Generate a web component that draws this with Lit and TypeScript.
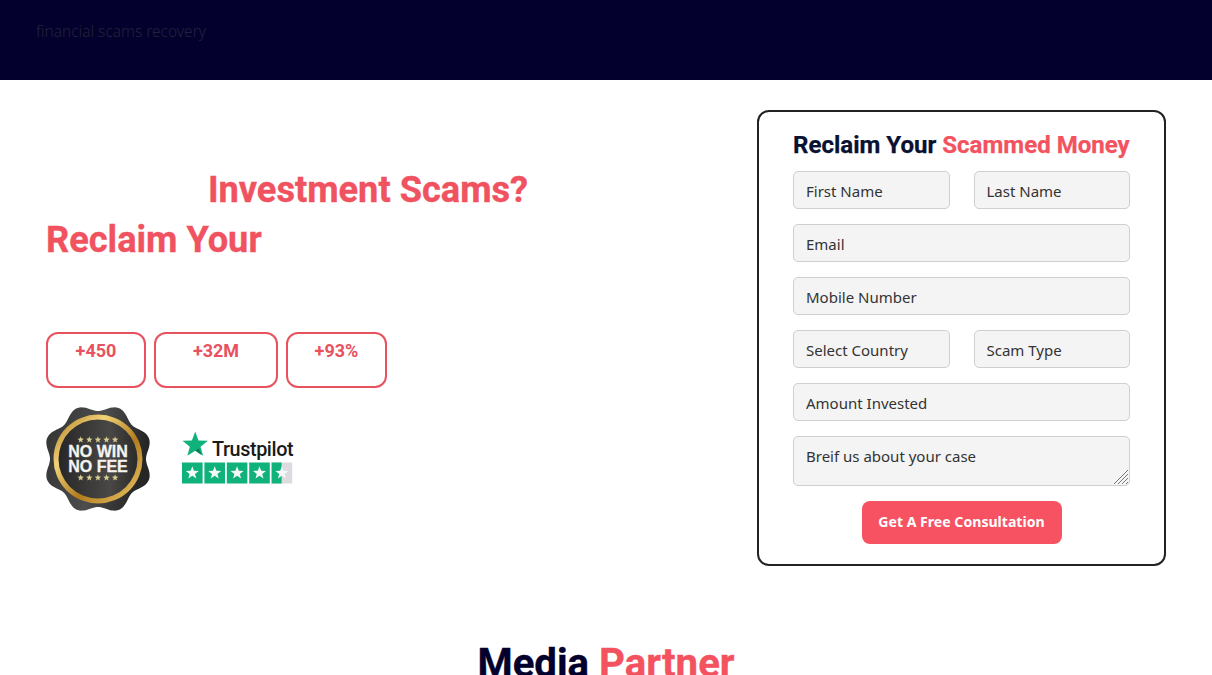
import { LitElement, html, css, svg } from "lit";
import { customElement } from "lit/decorators.js";

function badgePath(): string {
  const pts: string[] = [];
  const n = 240;
  for (let i = 0; i < n; i++) {
    const t = (i / n) * Math.PI * 2;
    const r = 51.5 - 3.5 * Math.cos(8 * t);
    pts.push(`${(52 + r * Math.sin(t)).toFixed(2)},${(52 - r * Math.cos(t)).toFixed(2)}`);
  }
  return "M" + pts.join("L") + "Z";
}

function starPoints(cx: number, cy: number, R: number): string {
  const r = R * 0.42;
  const p: string[] = [];
  for (let i = 0; i < 10; i++) {
    const a = (i * Math.PI) / 5;
    const rad = i % 2 ? r : R;
    p.push(`${(cx + rad * Math.sin(a)).toFixed(2)},${(cy - rad * Math.cos(a)).toFixed(2)}`);
  }
  return p.join(" ");
}

@customElement("app-root")
export class AppRoot extends LitElement {
  static styles = css`
    :host {
      display: block;
      height: 675px;
      overflow: hidden;
      background: #fff;
      font-family: "Noto Sans", "Open Sans", sans-serif;
    }
    .top {
      height: 80px;
      box-sizing: border-box;
      background: #03002e;
      padding: 20px 36px;
      color: #232239;
      font-size: 15.5px;
      font-weight: 300;
      line-height: 23px;
    }
    .main {
      display: flex;
      justify-content: space-between;
      padding: 30px 46px 0;
    }
    .left {
      width: 644px;
    }
    h1 {
      margin: 0;
      padding-top: 55px;
      font: 700 36.2px/50px Roboto, sans-serif;
      -webkit-text-stroke: 0.35px currentColor;
      color: #f0525f;
    }
    .l1 {
      text-align: center;
    }
    .stats {
      display: flex;
      gap: 8px;
      margin-top: 67px;
    }
    .stat {
      box-sizing: border-box;
      height: 56px;
      border: 2px solid #e8525f;
      border-radius: 12px;
      text-align: center;
      font: 700 18px/34px Roboto, sans-serif;
      color: #e8525f;
    }
    .logos {
      display: flex;
      align-items: flex-start;
      gap: 31px;
      margin-top: 19px;
    }
    .logos svg {
      display: block;
    }
    .tp {
      margin-top: 24px;
    }
    .tp-name {
      font-family: Roboto, sans-serif;
      font-weight: 500;
      font-size: 19.8px;
      letter-spacing: -0.4px;
      fill: #1a1a1a;
    }
    .seal-text {
      font-family: "Liberation Sans", sans-serif;
      font-weight: 700;
      font-size: 16px;
      fill: #f4f3ef;
      stroke: #f4f3ef;
      stroke-width: 0.3px;
      text-anchor: middle;
    }
    form {
      box-sizing: border-box;
      width: 409px;
      height: 456px;
      border: 2px solid #222;
      border-radius: 12px;
      padding: 18px 34px 20px;
      display: flex;
      flex-direction: column;
      gap: 15px;
    }
    .form-title {
      margin: 0 0 -5px;
      font: 700 24.05px/31px Roboto, sans-serif;
      -webkit-text-stroke: 0.25px currentColor;
      color: #0a1232;
      white-space: nowrap;
    }
    .form-title span,
    .partner span {
      color: #f3525f;
    }
    .row {
      display: flex;
      gap: 24px;
    }
    input,
    textarea {
      box-sizing: border-box;
      width: 100%;
      min-width: 0;
      height: 38px;
      padding: 2px 12px 0;
      border: 1.5px solid #cfcfd1;
      border-radius: 5px;
      background: #f4f4f5;
      font: 400 15px "Noto Sans", sans-serif;
      color: #333;
      outline: none;
      display: block;
    }
    .area {
      position: relative;
    }
    textarea {
      height: 50px;
      padding: 8px 12px;
      line-height: 22px;
      resize: none;
    }
    .grip {
      position: absolute;
      right: 1px;
      bottom: 1px;
      pointer-events: none;
    }
    ::placeholder {
      color: #333;
      opacity: 1;
    }
    button {
      align-self: center;
      width: 200px;
      height: 43px;
      border: 0;
      border-radius: 8px;
      background: #f65261;
      color: #fff;
      font: 700 14.1px/40px "Noto Sans", sans-serif;
      padding: 0 0 1px;
    }
    .partner {
      margin: 74px 0 0;
      text-align: center;
      font: 700 40.2px/47px Roboto, sans-serif;
      -webkit-text-stroke: 0.35px currentColor;
      color: #03002e;
    }
  `;

  private seal() {
    const stars = [0, 1, 2, 3, 4].map((i) => 34.7 + i * 8.6);
    return html`<svg width="104" height="104" viewBox="0 0 104 104" role="img" aria-label="No win no fee">
      <defs>
        <linearGradient id="sealDark" x1="0" y1="0" x2="1" y2="0.2">
          <stop offset="0" stop-color="#333" />
          <stop offset="0.55" stop-color="#4d4d4d" />
          <stop offset="1" stop-color="#262626" />
        </linearGradient>
        <linearGradient id="gold" x1="0" y1="0" x2="1" y2="1">
          <stop offset="0" stop-color="#a9761c" />
          <stop offset="0.3" stop-color="#f2d277" />
          <stop offset="0.6" stop-color="#b27c1e" />
          <stop offset="1" stop-color="#f0cd6e" />
        </linearGradient>
        <linearGradient id="sealCore" x1="0" y1="0" x2="1" y2="0">
          <stop offset="0" stop-color="#272727" />
          <stop offset="0.65" stop-color="#4a4846" />
          <stop offset="1" stop-color="#2a2a2a" />
        </linearGradient>
      </defs>
      <path d=${badgePath()} fill="url(#sealDark)" />
      <circle cx="52" cy="52" r="44.5" fill="url(#gold)" />
      <circle cx="52" cy="52" r="39.5" fill="url(#sealCore)" />
      ${stars.map((x) => svg`<polygon points=${starPoints(x, 32.7, 3.4)} fill="#d9cd92" />`)}
      <text class="seal-text" x="52" y="50">NO WIN</text>
      <text class="seal-text" x="52" y="64.5">NO FEE</text>
      ${stars.map((x) => svg`<polygon points=${starPoints(x, 70.7, 3.4)} fill="#d9cd92" />`)}
    </svg>`;
  }

  private trust() {
    const boxes = [0, 1, 2, 3, 4].map((i) => 1 + i * 22.4);
    return html`<svg class="tp" width="113" height="54" viewBox="0 0 113 54" role="img" aria-label="Trustpilot">
      <polygon points=${starPoints(14.2, 14, 13.4)} fill="#10b27b" />
      <polygon points="18,17.5 20.5,24 14.2,19.5" fill="#0a7d56" />
      <text class="tp-name" x="31" y="24.5">Trustpilot</text>
      <rect x=${boxes[4]} y="31.5" width="20.6" height="21" fill="#dcdce0" />
      ${boxes.map(
        (x, i) =>
          svg`<rect x=${x} y="31.5" width=${i === 4 ? 10 : 20.6} height="21" fill="#10b27b" />`
      )}
      ${boxes.map((x) => svg`<polygon points=${starPoints(x + 10.3, 42, 6.8)} fill="#f6f8f7" />`)}
    </svg>`;
  }

  render() {
    return html`
      <div class="top">financial scams recovery</div>
      <div class="main">
        <section class="left">
          <h1>
            <div class="l1">Investment Scams?</div>
            <div>Reclaim Your</div>
          </h1>
          <div class="stats">
            <div class="stat" style="width:100px">+450</div>
            <div class="stat" style="width:124px">+32M</div>
            <div class="stat" style="width:101px">+93%</div>
          </div>
          <div class="logos">${this.seal()} ${this.trust()}</div>
        </section>
        <form @submit=${(e: Event) => e.preventDefault()}>
          <h2 class="form-title">Reclaim Your <span>Scammed Money</span></h2>
          <div class="row">
            <input placeholder="First Name" />
            <input placeholder="Last Name" />
          </div>
          <input placeholder="Email" />
          <input placeholder="Mobile Number" />
          <div class="row">
            <input placeholder="Select Country" />
            <input placeholder="Scam Type" />
          </div>
          <input placeholder="Amount Invested" />
          <div class="area">
            <textarea placeholder="Breif us about your case"></textarea>
            <svg class="grip" width="16" height="16" viewBox="0 0 16 16" aria-hidden="true">
              <path d="M1 15L15 1M5 15L15 5M9 15L15 9M13 15L15 13" stroke="#777" stroke-width="1" fill="none" />
            </svg>
          </div>
          <button type="submit">Get A Free Consultation</button>
        </form>
      </div>
      <h2 class="partner">Media <span>Partner</span></h2>
    `;
  }
}
